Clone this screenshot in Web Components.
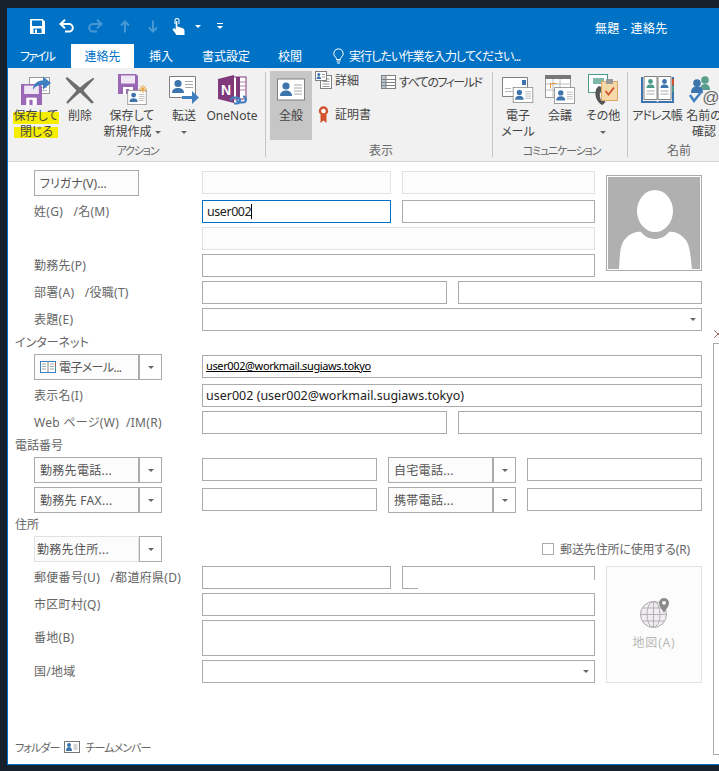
<!DOCTYPE html>
<html>
<head>
<meta charset="utf-8">
<title>無題 - 連絡先</title>
<style>
html,body{margin:0;height:771px;overflow:hidden;background:#17212e;}
body{padding:8px 0 0 7px;box-sizing:border-box;font:12px "Noto Sans","Noto Sans CJK JP",sans-serif;font-feature-settings:"palt";color:#444;}
</style>
</head>
<body>
<ol-window>
  <ol-titlebar title-text="無題 - 連絡先"></ol-titlebar>
  <ol-tabs>
    <ol-tab w="63" file>ファイル</ol-tab>
    <ol-tab w="63" active>連絡先</ol-tab>
    <ol-tab w="54">挿入</ol-tab>
    <ol-tab w="76">書式設定</ol-tab>
    <ol-tab w="52">校閲</ol-tab>
    <ol-tell>実行したい作業を入力してください...</ol-tell>
  </ol-tabs>
  <ol-ribbon>
    <rb-group w="257" label="アクション" pad="2" tight>
      <rb-btn w="52" icon="saveclose"><mark>保存して</mark><mark class="b">閉じる</mark></rb-btn>
      <rb-btn w="36" icon="del"><span>削除</span></rb-btn>
      <rb-btn w="68" icon="savenew"><span>保存して</span><span>新規作成 <rb-caret></rb-caret></span></rb-btn>
      <rb-btn w="36" icon="forward"><span>転送</span><span><rb-caret></rb-caret></span></rb-btn>
      <rb-btn w="60" icon="onenote"><span>OneNote</span></rb-btn>
    </rb-group>
    <rb-sep></rb-sep>
    <rb-group w="226" label="表示" pad="4">
      <rb-btn w="42" icon="cardbig" selected><span>全般</span></rb-btn>
      <rb-col w="66">
        <rb-small icon="detail">詳細</rb-small>
        <rb-small icon="cert">証明書</rb-small>
      </rb-col>
      <rb-col low>
        <rb-small icon="table" tight>すべてのフィールド</rb-small>
      </rb-col>
    </rb-group>
    <rb-sep></rb-sep>
    <rb-group w="134" label="コミュニケーション" pad="3" tight>
      <rb-btn w="44" icon="mail"><span>電子</span><span>メール</span></rb-btn>
      <rb-btn w="40" icon="meeting"><span>会議</span></rb-btn>
      <rb-btn w="46" icon="other"><span>その他</span><span><rb-caret></rb-caret></span></rb-btn>
    </rb-group>
    <rb-sep></rb-sep>
    <rb-group w="100" label="名前" pad="2">
      <rb-btn w="54" icon="book"><span class="k">アドレス帳</span></rb-btn>
      <rb-btn w="38" icon="check" style="margin-left:1px"><span>名前の</span><span>確認</span></rb-btn>
    </rb-group>
  </ol-ribbon>
  <ol-body>
    <f-main>
      <f-section>
        <f-split>
          <f-stack>
            <f-row tall cols="189px 193px">
              <f-combo slot="label" plain>フリガナ(V)...</f-combo>
              <f-input disabled></f-input><f-input disabled></f-input>
            </f-row>
            <f-row cols="189px 193px">
              <f-label slot="label">姓(G)   /名(M)</f-label>
              <f-input focused>user002</f-input><f-input></f-input>
            </f-row>
            <f-row cols="1fr"><f-input disabled></f-input></f-row>
            <f-row cols="1fr">
              <f-label slot="label">勤務先(P)</f-label>
              <f-input></f-input>
            </f-row>
          </f-stack>
          <f-photo></f-photo>
        </f-split>
        <f-row cols="245px 244px">
          <f-label slot="label">部署(A)   /役職(T)</f-label>
          <f-input></f-input><f-input></f-input>
        </f-row>
        <f-row cols="1fr">
          <f-label slot="label">表題(E)</f-label>
          <f-input select></f-input>
        </f-row>
      </f-section>
      <f-section title-text="インターネット">
        <f-row tall cols="1fr">
          <f-combo slot="label" icon="addr" tight>電子メール...</f-combo>
          <f-input link>user002@workmail.sugiaws.tokyo</f-input>
        </f-row>
        <f-row cols="1fr">
          <f-label slot="label">表示名(I)</f-label>
          <f-input>user002 (user002@workmail.sugiaws.tokyo)</f-input>
        </f-row>
        <f-row cols="245px 244px">
          <f-label slot="label">Web ページ(W)  /IM(R)</f-label>
          <f-input></f-input><f-input></f-input>
        </f-row>
      </f-section>
      <f-section title-text="電話番号">
        <f-row tall cols="175px 128px 175px">
          <f-combo slot="label">勤務先電話...</f-combo>
          <f-input></f-input><f-combo>自宅電話...</f-combo><f-input></f-input>
        </f-row>
        <f-row tall cols="175px 128px 175px">
          <f-combo slot="label">勤務先 FAX...</f-combo>
          <f-input></f-input><f-combo>携帯電話...</f-combo><f-input></f-input>
        </f-row>
      </f-section>
      <f-section title-text="住所">
        <f-row tall cols="1fr">
          <f-combo slot="label" quiet>勤務先住所...</f-combo>
          <f-check>郵送先住所に使用する(R)</f-check>
        </f-row>
        <f-split>
          <f-stack>
            <f-row cols="189px 193px">
              <f-label slot="label">郵便番号(U)   /都道府県(D)</f-label>
              <f-input></f-input><f-input partial></f-input>
            </f-row>
            <f-row cols="1fr">
              <f-label slot="label">市区町村(Q)</f-label>
              <f-input></f-input>
            </f-row>
            <f-row cols="1fr" h="36">
              <f-label slot="label">番地(B)</f-label>
              <f-input></f-input>
            </f-row>
            <f-row cols="1fr">
              <f-label slot="label">国/地域</f-label>
              <f-input select></f-input>
            </f-row>
          </f-stack>
          <f-map>地図(A)</f-map>
        </f-split>
      </f-section>
      <f-footer>
        <span>フォルダー</span><ol-icon name="cardsmall"></ol-icon><span>チームメンバー</span>
      </f-footer>
    </f-main>
    <f-side></f-side>
  </ol-body>
</ol-window>

<script>
// small helpers for the ribbon pictures
function card(x,y,w,h){
  return `<svg x="${x}" y="${y}" width="${w}" height="${h}" viewBox="0 0 28 22"><rect x=".5" y=".5" width="27" height="21" fill="#fff" stroke="#808080"/><circle cx="9" cy="7.5" r="3.6" fill="#3d74ad"/><path d="M3 17.5c0-4 3-5.5 6-5.5s6 1.500 6 5.500z" fill="#3d74ad"/><path d="M17 6.500h8M17 9.500h8M17 12.500h8M17 15.500h8" stroke="#a8a8a8"/></svg>`;
}
function floppy(x,y,s){
  return `<svg x="${x}" y="${y}" width="${s}" height="${s}" viewBox="0 0 20 20"><path d="M0 0h18l2 2v18H0z" fill="#9a68b4"/><rect x="3" y="1.500" width="14" height="8" fill="#efe6f4"/><rect x="5" y="13" width="10" height="7" fill="#fff"/><rect x="8" y="15" width="3" height="5" fill="#9a68b4"/></svg>`;
}
const ICONS={
  save:[15,15,`<path fill="#fff" fill-rule="evenodd" d="M0 0h12.500L15 2.500V15H0zM2 1.500V7h10V1.500zM3.500 9.500V14h8V9.500z"/><rect x="5" y="10.500" width="2" height="3.500" fill="#fff"/>`],
  undo:[15,14,`<path d="M2 5h8a3.800 3.800 0 0 1 0 7.600H6" fill="none" stroke="#fff" stroke-width="2"/><path d="M6 .8L1.500 5 6 9.200" fill="none" stroke="#fff" stroke-width="2"/>`],
  redo:[15,14,`<g opacity=".28"><path d="M13 5H5a3.800 3.800 0 0 0 0 7.600h4" fill="none" stroke="#fff" stroke-width="2"/><path d="M9 .8L13.500 5 9 9.200" fill="none" stroke="#fff" stroke-width="2"/></g>`],
  up:[10,13,`<path d="M5 12.500V2M1 5.500L5 1.500l4 4" fill="none" stroke="#fff" stroke-opacity=".28" stroke-width="2"/>`],
  down:[10,13,`<path d="M5 .5V11M1 7.500L5 11.500l4-4" fill="none" stroke="#fff" stroke-opacity=".28" stroke-width="2"/>`],
  touch:[13,17,`<path fill="#fff" d="M2.500 2.500a2.500 2.500 0 0 1 5 0V6h-1V2.500a1.500 1.500 0 0 0-3 0V6h-1z"/><path fill="#fff" d="M3.700 3h1.600v5.500l5 1.500c1.500.5 2.200 1.200 2.200 2.500V17H4.500L.5 11.500 2 10l1.700 1.500z"/>`],
  bulb:[11,16,`<path d="M5.500.8a4.700 4.700 0 0 0-2.800 8.500c.6.600.8 1.200.8 2.200h4c0-1 .2-1.600.8-2.200A4.700 4.700 0 0 0 5.500.8z" fill="none" stroke="#fff"/><path d="M3.500 13h4M4 15h3" stroke="#fff"/>`],
  saveclose:[31,30,`<rect x="8.500" y="2.500" width="20" height="16" fill="#fff" stroke="#9a9a9a"/><path d="M18 9.500h8M18 12.500h8M18 15.500h8" stroke="#bbb"/>${floppy(0,9,21)}<path d="M12 15c0-7 5-9.500 10-9.500V1.500l8 6.500-8 6.500V10c-4.500 0-8 1-10 5z" fill="#3f7fbf"/>`],
  del:[30,28,`<path fill="#6d6d6d" d="M2 1c5 4 9 7 13 10.500C19 8 23 5 28 2c.8 0 1.500.6 1 1.300C25.500 7 22 10.500 18.500 14.500 21.500 18 25 22 29 26.500l-2.500 1c-4-4-8-7.500-11.500-11C11 20 7 23.500 3 27.500c-1 0-1.800-.6-1.500-1.500C5 22 8.500 18 11.500 14.500 8 11 4.500 7 .5 2.500z"/>`],
  savenew:[32,31,`${floppy(2,0,20)}${card(10,16,22,15)}<g stroke="#eaa33c" stroke-width="1"><path d="M27 11v8M23 15h8M24.200 12.200l5.600 5.600M29.800 12.200l-5.600 5.600"/></g>`],
  forward:[31,28,`<path d="M.5.500h26v21H.5z" fill="#fff" stroke="#808080"/><circle cx="9" cy="7.500" r="3.600" fill="#3d74ad"/><path d="M3 17c0-4 3-5 6-5s6 1 6 5z" fill="#3d74ad"/><path d="M16 5.500h8M16 8.500h8M16 11.500h8" stroke="#a8a8a8"/><path d="M13 20h10v-5l7 6.500-7 6.500v-5H13z" fill="#3f7fbf"/>`],
  onenote:[29,30,`<rect x="11" y="2" width="17" height="22" fill="#fff" stroke="#80397b"/><path d="M18 2h4v22h-4z" fill="#80397b"/><path d="M22 7h6M22 11h6M22 15h6" stroke="#b57fb0"/><path d="M0 4l16-4v28l-16-4z" fill="#80397b"/><text x="8" y="20" text-anchor="middle" font-size="14" font-weight="700" font-family="Liberation Sans" fill="#fff">N</text><path d="M13 25.500a3 3 0 0 1 3-3h3a3 3 0 0 1 0 6h-3M25 21.500a3 3 0 0 1 0 6h-3a3 3 0 0 1-3-3" fill="none" stroke="#3f7fbf" stroke-width="2"/>`],
  cardbig:[28,23,card(0,0,28,23)],
  detail:[17,18,`<rect x="5.500" y="4.500" width="11" height="13" fill="#fff" stroke="#808080"/><path d="M7.500 8h7M7.500 10.500h7M7.500 13h7M7.500 15.500h7" stroke="#999"/><rect x=".5" y=".5" width="11" height="9" fill="#fff" stroke="#808080"/><circle cx="3.800" cy="3.500" r="1.500" fill="#3d74ad"/><path d="M1.500 8c0-2 1-2.500 2.300-2.500S6 6 6 8z" fill="#3d74ad"/><path d="M7 3.500h3M7 6h3" stroke="#999"/>`],
  cert:[17,17,`<g transform="translate(3 0)"><circle cx="5.500" cy="5" r="3.500" fill="#fff" stroke="#d2522e" stroke-width="2.400"/><path d="M2.500 9v8l3-2.500 3 2.500V9z" fill="#d2522e"/></g>`],
  table:[15,14,`<rect x=".5" y=".5" width="14" height="13" fill="#fff" stroke="#808080"/><rect x="1" y="1" width="4" height="12" fill="#b9c6d6"/><path d="M1 4.500h13M1 7.500h13M1 10.500h13M5 1v12" stroke="#808080"/>`],
  mail:[32,26,`<path d="M22 19.500H.5V.5h25v11" fill="#fff" stroke="#808080"/><rect x="20" y="3" width="4" height="5" fill="#3d74ad"/><path d="M3 11.500h6M3 14.500h8" stroke="#bbb"/>${card(10,10,22,16)}`],
  meeting:[30,29,`<rect x=".5" y=".5" width="25" height="22" fill="#fff" stroke="#9a9a9a"/><rect y="0" width="26" height="4" fill="#777"/><path d="M1 9h25M1 15h25M8 4v19M15 4v19" stroke="#bbb"/><path d="M5.500 13.500V8.500h6" fill="none" stroke="#e8913a"/>${card(9,12,21,17)}`],
  other:[30,32,`<rect x=".5" y=".5" width="19" height="18" fill="#fff" stroke="#4d9a8a"/><rect x="5" y="4" width="11" height="6" fill="#7fb7a8"/><path d="M11 12c-2 1-4 4-3.500 9 .5 5 4 9 7 10l3-3-3-3-1.500 1c-1-1.500-1.500-5.500-1-8l2-.5-.5-4.500z" fill="#555"/><rect x="13.500" y="7.500" width="16" height="19" fill="#f5d9a8" stroke="#d8a864"/><rect x="18" y="5" width="7" height="5" fill="#999"/><path d="M17.500 17l3 3.500 5.500-7" fill="none" stroke="#d2522e" stroke-width="1.800"/>`],
  book:[33,27,`<path d="M0 1h2v24h13l1.500 1 1.500-1h13V1h2v26H0z" fill="#3d74ad"/><path d="M3 .5h13v23H3zM17 .5h13v23H17z" fill="#fff" stroke="#808080"/><circle cx="9.500" cy="5.500" r="2.400" fill="#4d9a8a"/><path d="M5.500 12c0-3 2-3.500 4-3.500s4 .5 4 3.500z" fill="#4d9a8a"/><circle cx="23.500" cy="5.500" r="2.400" fill="#3d74ad"/><path d="M19.500 12c0-3 2-3.500 4-3.500s4 .5 4 3.500z" fill="#3d74ad"/><path d="M5.500 15h8M5.500 18h8M19.500 15h8M19.500 18h8" stroke="#aaa"/><path d="M31 3h2v6h-2z" fill="#d2522e"/><path d="M31 10h2v6h-2z" fill="#4d9a8a"/><path d="M31 17h2v6h-2z" fill="#3d74ad"/>`],
  check:[30,30,`<circle cx="16" cy="5" r="3.800" fill="#5a9e8e"/><path d="M11 15c0-4 2-6 5-6s5 2 5 6z" fill="#5a9e8e"/><circle cx="8" cy="8" r="3.800" fill="#3d74ad"/><path d="M2 18c0-5 3-7 6-7s6 2 6 7z" fill="#3d74ad"/><path d="M1 20l4 6 8-10" fill="none" stroke="#3f7fbf" stroke-width="2.500"/><text x="22" y="28" text-anchor="middle" font-size="17" font-family="Liberation Sans" fill="#666">@</text>`],
  addr:[16,12,`<rect x=".5" y=".5" width="15" height="11" fill="#fff" stroke="#3f7fbf"/><path d="M8 .5v11" stroke="#888"/><path d="M2 3h4M2 5.500h4M2 8h4M10 3h4M10 5.500h4M10 8h4" stroke="#9aa"/><path d="M15 2h1v3h-1z" fill="#d2522e"/><path d="M15 6h1v3h-1z" fill="#4d9a8a"/>`],
  cardsmall:[16,12,`<rect x=".5" y=".5" width="15" height="11" fill="#fff" stroke="#777"/><circle cx="5" cy="4" r="2" fill="#3d74ad"/><path d="M2 10c0-3 1.500-4 3-4s3 1 3 4z" fill="#3d74ad"/><path d="M9.500 4h4M9.500 6h4M9.500 8h4" stroke="#aaa"/>`],
  globe:[29,30,`<circle cx="13.500" cy="16.500" r="13" fill="#f0edf0" stroke="#a9a6a9"/><path d="M.5 16.500h26M2.500 10h22M2.500 23h22M13.500 3.500v26" stroke="#b4b1b4"/><ellipse cx="13.500" cy="16.500" rx="6.500" ry="13" fill="none" stroke="#b4b1b4"/><path d="M24 0a5 5 0 0 1 5 5c0 3.500-3 6-5 10-2-4-5-6.500-5-10a5 5 0 0 1 5-5z" fill="#8b8b8b"/><circle cx="24" cy="4.800" r="1.900" fill="#fff"/>`]
};

// the icon draws itself whenever its name attribute arrives
customElements.define("ol-icon",class extends HTMLElement{
  static get observedAttributes(){return ["name"];}
  constructor(){
    super();
    this.attachShadow({mode:"open"}).innerHTML=`<style>:host{display:inline-flex;line-height:0}</style><svg></svg>`;
  }
  attributeChangedCallback(){
    const d=ICONS[this.getAttribute("name")], s=this.shadowRoot.querySelector("svg");
    if(!d) return;
    s.setAttribute("width",d[0]);s.setAttribute("height",d[1]);
    s.setAttribute("viewBox",`0 0 ${d[0]} ${d[1]}`);
    s.innerHTML=d[2];
  }
});

// define(): every element gets an open shadow root filled from its template string
function define(name,html,extra){
  customElements.define(name,class extends HTMLElement{
    constructor(){
      super();
      this.attachShadow({mode:"open"}).innerHTML=html;
    }
    connectedCallback(){
      if(extra) extra.call(this);
    }
  });
}

define("ol-window",`<style>
:host{display:flex;flex-direction:column;height:756px;width:720px;background:#fff;border-left:1px solid #0072c6;border-bottom:1px solid #0072c6;overflow:hidden}
</style><slot></slot>`);

define("ol-titlebar",`<style>
:host{display:flex;align-items:center;height:36px;background:#0072c6;color:#fff;flex:none}
.q{display:flex;align-items:center;justify-content:center;width:29px;height:16px}
.t{margin-left:372px;font-size:12px;letter-spacing:.3px;white-space:nowrap;padding-top:3px}
.d{width:0;height:0;border:3px solid transparent;border-top:3px solid #fff;border-bottom:0;margin-left:6px}
.c{display:flex;flex-direction:column;align-items:center;gap:2px;margin-left:15px;width:7px}
.c b{width:6px;height:1px;background:#fff}
.c i{width:0;height:0;border:3px solid transparent;border-top:3px solid #fff;border-bottom:0}
.s{width:15px}
</style>
<div class="s"></div>
<div class="q"><ol-icon name="save"></ol-icon></div>
<div class="q"><ol-icon name="undo"></ol-icon></div>
<div class="q"><ol-icon name="redo"></ol-icon></div>
<div class="q"><ol-icon name="up"></ol-icon></div>
<div class="q" style="width:28px"><ol-icon name="down"></ol-icon></div>
<div class="q" style="width:22px"><ol-icon name="touch"></ol-icon></div>
<div class="d"></div>
<div class="c"><b></b><i></i></div>
<div class="t"></div>`,function(){
  this.shadowRoot.querySelector(".t").textContent=this.getAttribute("title-text");
});

define("ol-tabs",`<style>
:host{display:flex;height:24px;background:#0072c6;flex:none}
</style><slot></slot>`);

define("ol-tab",`<style>
:host{display:flex;align-items:center;justify-content:center;color:#fff;font-size:12px;box-sizing:border-box;white-space:nowrap}
:host([active]){background:#fff;color:#0072c6}
:host([file]){padding-right:5px;letter-spacing:-1.900px}
</style><slot></slot>`,function(){
  this.style.width=this.getAttribute("w")+"px";
});

define("ol-tell",`<style>
:host{display:flex;align-items:center;gap:5px;color:#fff;margin-left:17px;font-size:12px;letter-spacing:-.9px;white-space:nowrap}
</style><ol-icon name="bulb"></ol-icon><slot></slot>`);

define("ol-ribbon",`<style>
:host{display:flex;height:94px;box-sizing:border-box;padding-top:3px;background:#f1f1f1;border-bottom:1px solid #d6d6d6;flex:none;overflow:hidden}
</style><slot></slot>`);

define("rb-group",`<style>
:host{display:grid;grid-template-rows:69px 21px;flex:none;box-sizing:border-box}
.c{display:flex;min-width:0}
.l{text-align:center;font-size:12px;line-height:22px;color:#666;white-space:nowrap}
:host([tight]) .l{font-size:11px;letter-spacing:-1.200px}
</style><div class="c"><slot></slot></div><div class="l"></div>`,function(){
  this.style.width=this.getAttribute("w")+"px";
  this.style.paddingLeft=this.getAttribute("pad")+"px";
  this.shadowRoot.querySelector(".l").textContent=this.getAttribute("label");
});

define("rb-sep",`<style>
:host{display:block;flex:none;width:1px;height:85px;margin-top:1px;background:#c6c6c6}
</style>`);

define("rb-btn",`<style>
:host{display:flex;flex-direction:column;align-items:center;flex:none;box-sizing:border-box;white-space:nowrap;color:#444;font-size:12px}
:host([selected]){background:#c6c6c6}
.i{height:37px;display:flex;align-items:center;justify-content:center}
::slotted(span),::slotted(mark){display:block;line-height:16px;text-align:center;color:#444}
::slotted(span.k){letter-spacing:-.9px}
::slotted(mark){background:linear-gradient(#f6ee00,#f6ee00) 0 4px/100% 12px no-repeat;padding:0 1px}
::slotted(mark.b){background:linear-gradient(#f6ee00,#f6ee00) 0 3px/100% 11px no-repeat;padding:0 5px 0 6px}
</style><div class="i"><ol-icon></ol-icon></div><slot></slot>`,function(){
  this.style.width=this.getAttribute("w")+"px";
  this.shadowRoot.querySelector("ol-icon").setAttribute("name",this.getAttribute("icon"));
});

define("rb-caret",`<style>
:host{display:inline-block;width:0;height:0;border:3px solid transparent;border-top:3px solid #666;border-bottom:0;vertical-align:middle}
</style>`);

define("rb-col",`<style>
:host{display:flex;flex-direction:column;gap:16px;flex:none;padding:0 0 0 3px;box-sizing:border-box}
:host([low]){padding-top:2px}
</style><slot></slot>`,function(){
  if(this.getAttribute("w")) this.style.width=this.getAttribute("w")+"px";
});

define("rb-small",`<style>
:host{display:flex;align-items:center;gap:3px;height:18px;white-space:nowrap;color:#444;font-size:12px}
:host([tight]){letter-spacing:-1.500px}
</style><ol-icon></ol-icon><slot></slot>`,function(){
  this.shadowRoot.querySelector("ol-icon").setAttribute("name",this.getAttribute("icon"));
});

define("ol-body",`<style>
:host{display:flex;flex:1;min-height:0}
</style><slot></slot>`);

define("f-main",`<style>
:host{display:flex;flex-direction:column;width:705px;flex:none;box-sizing:border-box;padding:8px 11px 9px 26px;color:#666}
</style><slot></slot>`);

define("f-section",`<style>
:host{display:flex;flex-direction:column;gap:4px}
.t{height:23px;line-height:23px;margin:0 0 -4px -19px;color:#666;font-size:12px}
.t:empty{display:none}
</style><div class="t"></div><slot></slot>`,function(){
  this.shadowRoot.querySelector(".t").textContent=this.getAttribute("title-text")||"";
});

define("f-split",`<style>
:host{display:grid;grid-template-columns:561px 96px;column-gap:11px}
</style><slot></slot>`);

define("f-stack",`<style>
:host{display:flex;flex-direction:column;gap:4px}
</style><slot></slot>`);

define("f-row",`<style>
:host{display:grid;grid-template-columns:168px 1fr}
:host([tall]){height:26px}
.f{display:grid;column-gap:11px;align-items:start}
:host([tall]) ::slotted(f-input){margin-top:1px}
</style><div class="l"><slot name="label"></slot></div><div class="f"><slot></slot></div>`,function(){
  this.shadowRoot.querySelector(".f").style.gridTemplateColumns=this.getAttribute("cols");
  if(this.getAttribute("h")) this.style.setProperty("--h",this.getAttribute("h")+"px");
});

define("f-label",`<style>
:host{display:block;line-height:var(--h,23px);color:#666;white-space:pre;font-size:12px;letter-spacing:.3px}
</style><slot></slot>`);

define("f-input",`<style>
:host{display:block;box-sizing:border-box;height:var(--h,23px);border:1px solid #ababab;background:#fff;padding:0 3px;line-height:21px;font-size:12.500px;color:#222;white-space:nowrap;overflow:hidden;position:relative}
:host([disabled]){border-color:#e2e2e2;background:#fcfcfc}
:host([focused]){border-color:#0072c6;letter-spacing:-.45px;padding-left:4px}
:host([link]){font-size:11px;letter-spacing:-.37px;color:#000;text-decoration:underline;line-height:19px}
:host([partial]){border:0;background:linear-gradient(#ababab,#ababab) 0 0/100% 1px no-repeat,linear-gradient(#ababab,#ababab) 0 0/1px 100% no-repeat,linear-gradient(#ababab,#ababab) 100% 0/1px 14px no-repeat,linear-gradient(#ababab,#ababab) 0 100%/16px 1px no-repeat}
.k{display:none;width:1px;height:15px;background:#000;vertical-align:-3px}
:host([focused]) .k{display:inline-block}
.a{display:none;position:absolute;right:5px;top:9px;width:0;height:0;border:3px solid transparent;border-top:3px solid #666;border-bottom:0}
:host([select]) .a{display:block}
</style><slot></slot><span class="k"></span><span class="a"></span>`);

define("f-combo",`<style>
:host{display:inline-grid;grid-template-columns:105px 23px;width:128px;height:26px;box-sizing:border-box;color:#555;font-size:12px;letter-spacing:.3px}
:host([tight]){letter-spacing:-.6px}
:host([plain]){letter-spacing:0}
.m{display:flex;align-items:center;gap:3px;box-sizing:border-box;border:1px solid #ababab;padding-left:5px;background:#fcfcfc;white-space:nowrap}
.d{display:flex;align-items:center;justify-content:center;border:1px solid #ababab;background:#fff;box-sizing:border-box}
.d i{width:0;height:0;border:3px solid transparent;border-top:3px solid #666;border-bottom:0}
:host([plain]) .d{display:none}
:host([quiet]) .m{border-color:#e2e2e2;padding-left:2px}
</style><div class="m"><slot></slot></div><div class="d"><i></i></div>`,function(){
  if(this.getAttribute("icon")){
    const ic=document.createElement("ol-icon");
    ic.setAttribute("name",this.getAttribute("icon"));
    this.shadowRoot.querySelector(".m").prepend(ic);
  }
});

define("f-check",`<style>
:host{display:flex;align-items:center;gap:6px;height:26px;justify-self:end;margin-right:12px;color:#666;white-space:nowrap;font-size:12px;letter-spacing:-.15px}
i{width:10px;height:10px;border:1px solid #ababab;background:#fff}
</style><i></i><slot></slot>`);

define("f-photo",`<style>
:host{display:block;box-sizing:border-box;width:96px;height:96px;margin-top:5px;border:1px solid #ababab;padding:1px;background:#fff}
svg{display:block}
</style><svg width="92" height="92" viewBox="0 0 92 92"><rect width="92" height="92" fill="#b0b0b0"/><ellipse cx="47" cy="34" rx="18" ry="21" fill="#fff"/><path fill="#fff" d="M11 92C12 75 12 66 19 60C23 56 30 54 33 55C37 60 42 62 47 62C52 62 57 60 61 55C65 54 71 56 75 60C82 66 82 75 84 92Z"/></svg>`);

define("f-map",`<style>
:host{display:flex;flex-direction:column;align-items:center;justify-content:center;gap:5px;box-sizing:border-box;border:1px solid #e2e2e2;background:#fcfcfc;color:#b8b8b8;font-size:12px;letter-spacing:.8px}
</style><ol-icon name="globe"></ol-icon><slot></slot>`);

define("f-footer",`<style>
:host{display:flex;align-items:center;margin:auto 0 0 -19px;height:16px;color:#666;font-size:11px;letter-spacing:-.9px;gap:5px;white-space:nowrap}
</style><slot></slot>`);

define("f-side",`<style>
:host{display:flex;flex-direction:column;flex:1;min-width:0;padding-top:167px;padding-bottom:9px;box-sizing:border-box;overflow:hidden}
svg{display:block;flex:none;margin:0 0 4px 1px}
.p{flex:1;border:1px solid #ababab;border-right:0}
</style><svg width="10" height="10" viewBox="0 0 10 10"><path d="M0 1l8 8M8 1L0 9" stroke="#a06a6a" fill="none"/></svg><div class="p"></div>`);
</script>
</body>
</html>
